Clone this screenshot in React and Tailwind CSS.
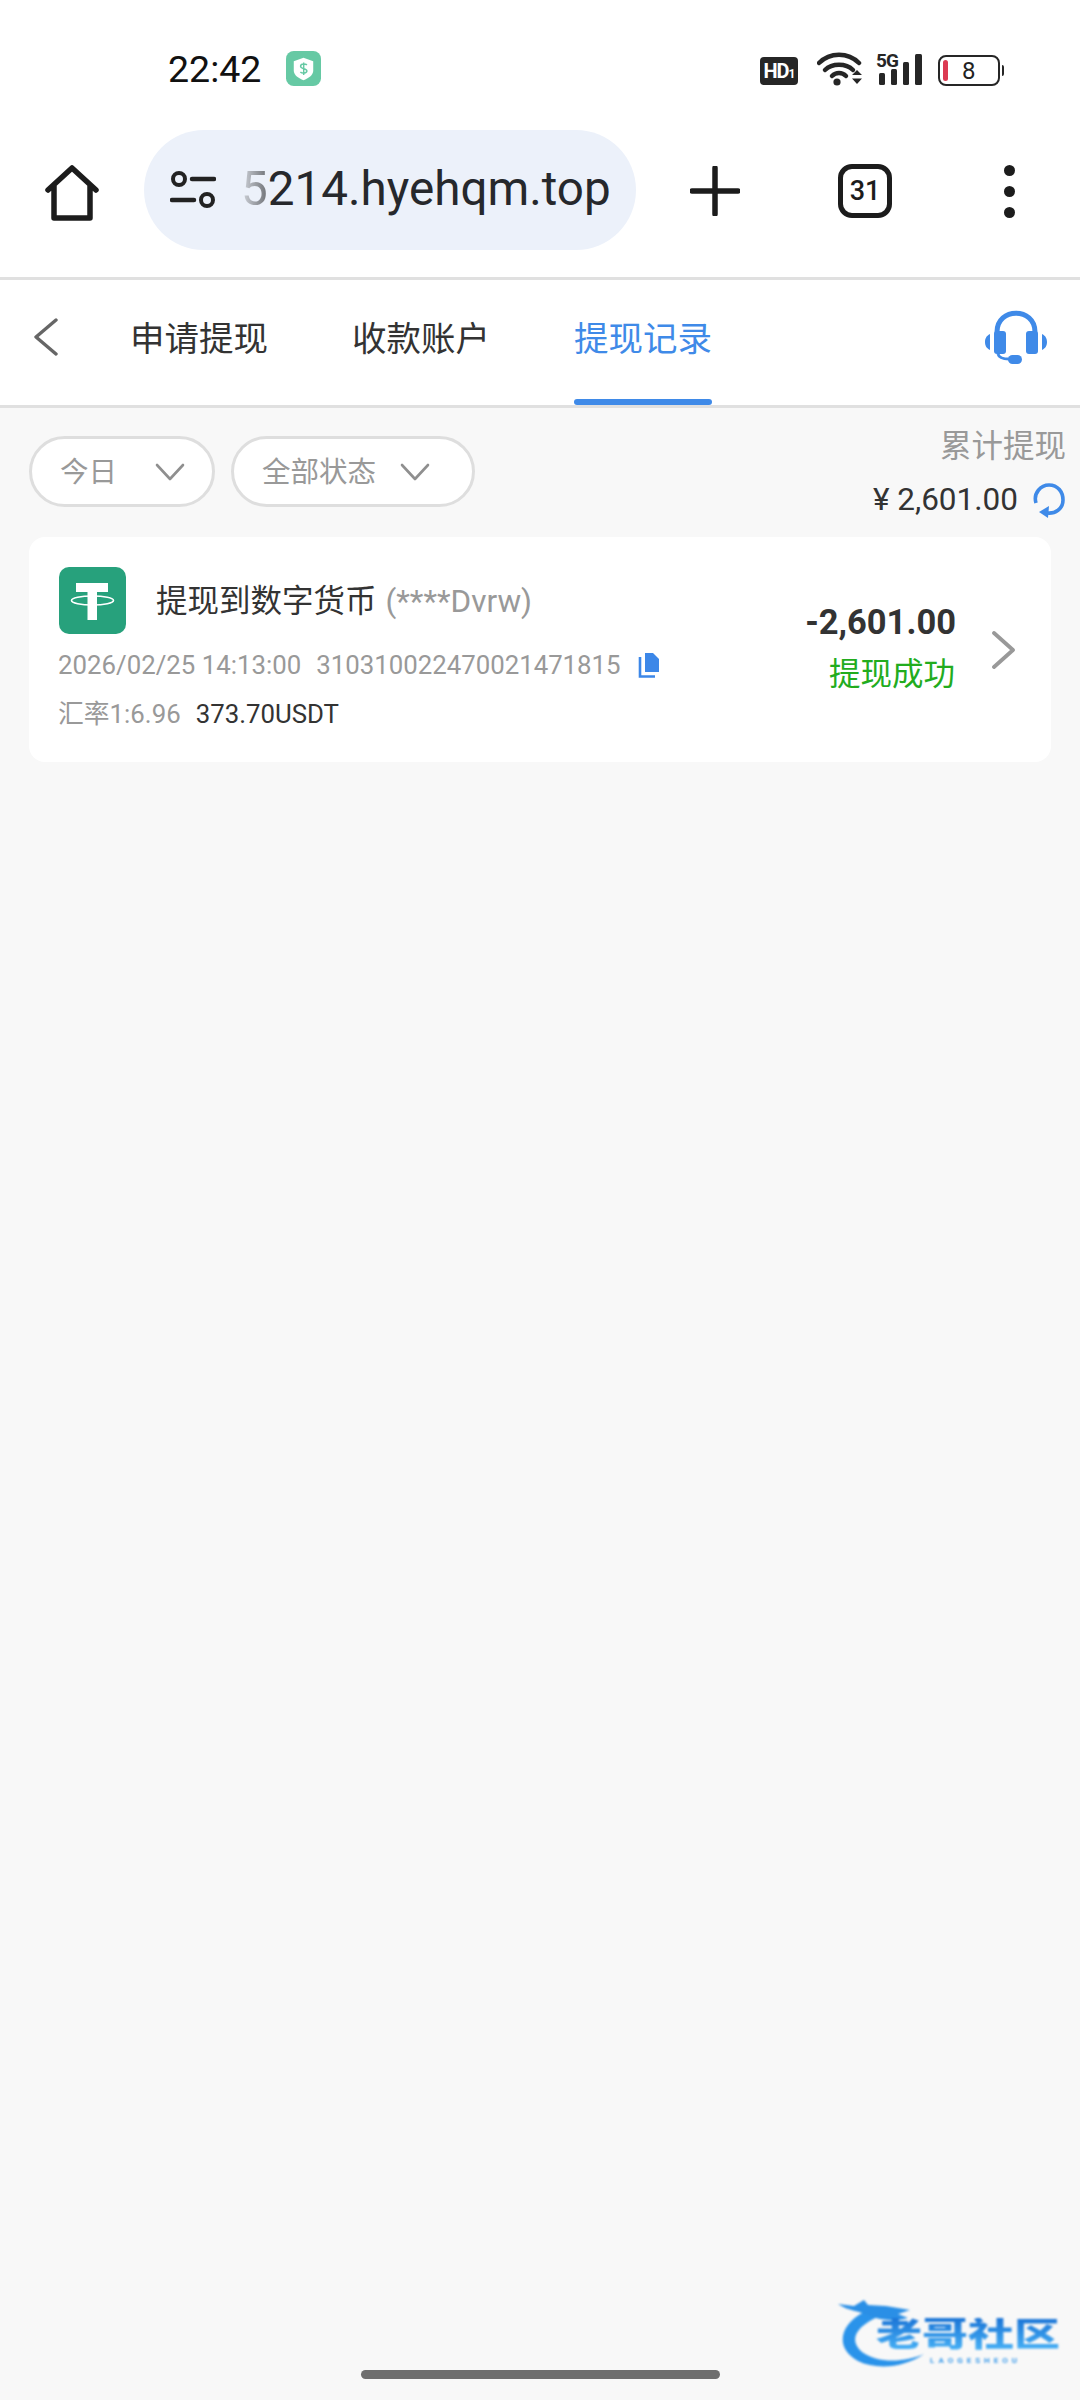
const FilterPill = ({ label, width, gap }) => (
  <div className={`flex h-[71px] items-center rounded-full border-[3px] border-[#dedede] bg-white pl-[28px] ${width}`}>
    <span className="mt-[4px] text-[28.5px] leading-none text-[#999999]">{label}</span>
    <svg width="30" height="18" viewBox="0 0 30 18" className={gap}>
      <path d="M2 2 L15 16 L28 2" fill="none" stroke="#8f8f8f" strokeWidth="2.6" strokeLinecap="round" strokeLinejoin="round" />
    </svg>
  </div>
);

function StatusBar() {
  return (
    <div className="flex h-[130px] items-start pt-[49px] pl-[168px]">
      <span className="w-[118px] text-[37.5px] leading-[40px] text-[#111111]">22:42</span>
      <svg width="35" height="35" viewBox="0 0 36 36" className="mt-[2px]">
        <rect width="36" height="36" rx="8" fill="#66c9a4" />
        <path d="M18 7 L28 10.5 V20 C28 25 23 28 18 30 C13 28 8 25 8 20 V10.5 Z" fill="#fff" />
        <path d="M21.5 14.5 C20 12.8 15 13 15 15.8 C15 19 21.5 17.4 21.5 20.6 C21.5 23 16.5 23.4 14.8 21.5 M18.2 11.8 V24.6" fill="none" stroke="#66c9a4" strokeWidth="1.5" />
      </svg>
      <div className="-mt-[1px] ml-[439px] flex items-center">
        <div className="mt-[6px] flex h-[28px] w-[38px] items-center justify-center rounded-[4px] bg-[#262626]">
          <span className="text-[20px] font-bold leading-none tracking-[-1px] text-white">HD<span className="text-[12px]">1</span></span>
        </div>
        <svg width="46" height="36" viewBox="0 0 46 36" className="ml-[19px] mt-[3px]">
          <path d="M2 12 C13 1 31 1 42 12" fill="none" stroke="#262626" strokeWidth="4.5" strokeLinecap="round" />
          <path d="M8 19 C15 12 29 12 36 19" fill="none" stroke="#262626" strokeWidth="4.5" strokeLinecap="round" />
          <path d="M15 25 C19 21 25 21 29 25" fill="none" stroke="#262626" strokeWidth="4.5" strokeLinecap="round" />
          <circle cx="20" cy="31" r="3.6" fill="#262626" />
          <path d="M35 24 L40 19 L45 24 Z M35 27.5 H45 L40 33 Z" fill="#262626" />
        </svg>
        <svg width="47" height="42" viewBox="0 -6 47 42" className="ml-[13px] -mt-[3px]">
          <text x="0" y="16" fontFamily="Roboto" fontWeight="700" fontSize="19" fill="#262626" letterSpacing="-1">5G</text>
          <rect x="3" y="22" width="6" height="12" rx="1.5" fill="#262626" />
          <rect x="15" y="18" width="6" height="16" rx="1.5" fill="#262626" />
          <rect x="27" y="11" width="6" height="23" rx="1.5" fill="#262626" />
          <rect x="39" y="3" width="7" height="31" rx="1.5" fill="#262626" />
        </svg>
        <div className="ml-[15px] mt-[6px] flex items-center">
          <div className="flex h-[31px] w-[62px] items-center rounded-[8px] border-[2px] border-[#262626] pl-[3px]">
            <div className="h-[21px] w-[5px] rounded-full bg-[#dc3a52]" />
            <span className="ml-[14px] text-[24px] leading-none text-[#222222]">8</span>
          </div>
          <div className="ml-[2px] h-[11px] w-[2px] rounded-r bg-[#262626]" />
        </div>
      </div>
    </div>
  );
}

function BrowserBar() {
  return (
    <div className="flex h-[147px] items-start pl-[45px]">
      <svg width="54" height="56" viewBox="0 0 54 56" className="mt-[35px]">
        <path d="M3 25 L27 3 L51 25 M9 21 V53 H45 V21" fill="none" stroke="#1c1c1c" strokeWidth="5.5" strokeLinecap="round" strokeLinejoin="round" />
      </svg>
      <div className="ml-[45px] flex h-[120px] w-[492px] items-center rounded-full bg-[#ecf1fa] pl-[26px]">
        <svg width="46" height="40" viewBox="0 0 46 40">
          <circle cx="9" cy="9" r="6" fill="none" stroke="#222222" strokeWidth="4" />
          <path d="M22 9 H44 M2 30 H24" stroke="#222222" strokeWidth="4.5" strokeLinecap="round" />
          <circle cx="37" cy="30" r="6" fill="none" stroke="#222222" strokeWidth="4" />
        </svg>
        <span className="ml-[25px] text-[47.6px] leading-none text-[#26282c]">
          <span className="bg-gradient-to-r from-[#d3d7de] to-[#6e7176] bg-clip-text text-transparent">5</span>214.hyehqm.top
        </span>
      </div>
      <svg width="50" height="50" viewBox="0 0 50 50" className="ml-[54px] mt-[36px]">
        <path d="M25 2 V48 M2 25 H48" stroke="#1c1c1c" strokeWidth="5.5" strokeLinecap="round" />
      </svg>
      <div className="ml-[98px] mt-[34px] flex h-[54px] w-[54px] items-center justify-center rounded-[14px] border-[5px] border-[#1c1c1c]">
        <span className="text-[27px] font-medium leading-none text-[#1c1c1c]">31</span>
      </div>
      <div className="ml-[112px] mt-[35px] flex flex-col gap-[10px]">
        <div className="h-[11px] w-[11px] rounded-full bg-[#1c1c1c]" />
        <div className="h-[11px] w-[11px] rounded-full bg-[#1c1c1c]" />
        <div className="h-[11px] w-[11px] rounded-full bg-[#1c1c1c]" />
      </div>
    </div>
  );
}

function TabBar() {
  return (
    <div className="flex h-[131px] items-start border-y-[3px] border-[#e0e0e0] bg-white pl-[33px]">
      <svg width="26" height="38" viewBox="0 0 26 38" className="mt-[38px]">
        <path d="M23 2 L3 19 L23 36" fill="none" stroke="#666666" strokeWidth="3.4" strokeLinecap="round" strokeLinejoin="round" />
      </svg>
      <span className="ml-[71px] mt-[39px] text-[34.5px] leading-[40px] text-[#333333]">申请提现</span>
      <span className="ml-[84px] mt-[39px] text-[34.5px] leading-[40px] text-[#333333]">收款账户</span>
      <div className="ml-[84px] flex h-full w-[138px] flex-col justify-between pt-[39px]">
        <span className="whitespace-nowrap text-[34.5px] leading-[40px] text-[#3f8ae8]">提现记录</span>
        <div className="h-[6px] rounded-full bg-[#3f8ae8]" />
      </div>
      <svg width="62" height="56" viewBox="0 0 62 56" className="ml-[273px] mt-[30px]">
        <path d="M12 28 V22 C12 -3 50 -3 50 22 V28" fill="none" stroke="#3f8ae8" strokeWidth="5" />
        <rect x="9" y="21" width="12" height="23" rx="3" fill="#3f8ae8" />
        <rect x="41" y="21" width="12" height="23" rx="3" fill="#3f8ae8" />
        <path d="M5 24 V40 C1 38 0 35 0 32 C0 29 1 26 5 24 Z M57 24 V40 C61 38 62 35 62 32 C62 29 61 26 57 24 Z" fill="#3f8ae8" />
        <path d="M13 44 C14 48 18 49 24 49" fill="none" stroke="#3f8ae8" strokeWidth="3" />
        <rect x="23" y="45" width="14" height="9" rx="4.5" fill="#3f8ae8" />
      </svg>
    </div>
  );
}

function Filters() {
  return (
    <div className="flex h-[129px] items-start justify-between pl-[29px] pr-[14px]">
      <div className="mt-[28px] flex gap-[16px]">
        <FilterPill label="今日" width="w-[186px]" gap="ml-[38px]" />
        <FilterPill label="全部状态" width="w-[244px]" gap="ml-[24px]" />
      </div>
      <div className="mt-[19px] flex flex-col items-end">
        <span className="text-[31.5px] leading-[40px] text-[#999999]">累计提现</span>
        <div className="mt-[13px] flex items-center">
          <span className="text-[31.5px] leading-[40px] text-[#333333]">¥ 2,601.00</span>
          <svg width="34" height="36" viewBox="0 0 34 36" className="ml-[14px]">
            <path d="M4 21 C1 11 9 3 17 3 C26 3 31 10 31 18 C31 27 23 32 15 31" fill="none" stroke="#3f8ae8" strokeWidth="3.6" />
            <path d="M17 24 L7 30 L16 36 Z" fill="#3f8ae8" />
          </svg>
        </div>
      </div>
    </div>
  );
}

function RecordCard() {
  return (
    <div className="ml-[29px] flex h-[225px] w-[1022px] items-start rounded-[16px] bg-white pl-[30px] pt-[30px]">
      <div className="flex w-[730px] flex-col">
        <div className="flex h-[67px] items-start">
          <svg width="67" height="67" viewBox="0 0 67 67" className="shrink-0">
            <rect width="67" height="67" rx="10" fill="#27a17c" />
            <path d="M17 16 H49 V25 H38 V53 H28.5 V25 H17 Z" fill="#fff" />
            <ellipse cx="33.5" cy="33.5" rx="21" ry="4.5" fill="none" stroke="#fff" strokeWidth="1.6" />
          </svg>
          <span className="ml-[30px] mt-[19px] text-[31.5px] leading-none text-[#333333]">提现到数字货币</span>
          <span className="ml-[9px] mt-[19px] text-[31.5px] leading-none text-[#999999]">(****Dvrw)</span>
        </div>
        <div className="-ml-[1px] mt-[15px] flex items-center text-[25.8px] leading-[32px] text-[#999999]">
          <span>2026/02/25 14:13:00</span>
          <span className="ml-[15px]">310310022470021471815</span>
          <svg width="22" height="26" viewBox="0 0 22 26" className="ml-[17px]">
            <path d="M7 1 H15 L21 7 V20 H7 Z" fill="#3c87e8" />
            <path d="M2 5 V24.5 H17" fill="none" stroke="#3c87e8" strokeWidth="2.6" />
          </svg>
        </div>
        <div className="-ml-[1px] mt-[17px] flex items-center text-[25.8px] leading-[32px]">
          <span className="text-[#999999]">汇率1:6.96</span>
          <span className="ml-[15px] text-[#333333]">373.70USDT</span>
        </div>
      </div>
      <div className="flex w-[167px] flex-col items-end pt-[35px]">
        <span className="whitespace-nowrap text-[34.5px] font-bold leading-[40px] text-[#333333]">-2,601.00</span>
        <span className="mr-[1px] mt-[13px] whitespace-nowrap text-[31.5px] leading-[40px] text-[#22ac1e]">提现成功</span>
      </div>
      <svg width="25" height="38" viewBox="0 0 25 38" className="ml-[35px] mt-[64px]">
        <path d="M3 2 L22 19 L3 36" fill="none" stroke="#999999" strokeWidth="3.8" strokeLinecap="round" strokeLinejoin="round" />
      </svg>
    </div>
  );
}

function Watermark() {
  return (
    <div className="absolute left-[836px] top-[2298px] h-[72px] w-[230px] blur-[0.8px]">
      <svg width="100" height="72" viewBox="0 0 100 72" className="absolute left-0 top-0">
        <path d="M28 14 C4 26 -2 50 22 63 C40 72 68 70 88 56 C70 64 42 66 26 54 C12 42 20 28 44 18 Z" fill="#2a93ea" />
        <path d="M2 6 L18 8 L28 2 L32 7 L50 8 L74 12 L62 16 L72 20 C58 24 44 22 34 18 C24 13 12 13 2 6 Z" fill="#2a8fe6" />
      </svg>
      <div className="absolute left-[40px] top-[20px] origin-top scale-y-[0.72] whitespace-nowrap bg-gradient-to-b from-[#1b74d6] to-[#48b2f6] bg-clip-text text-[46px] font-black leading-none text-transparent">老哥社区</div>
      <div className="absolute left-[94px] top-[59px] whitespace-nowrap text-[8px] font-bold leading-none tracking-[4px] text-[#3a9aea]">LAOGESHEOU</div>
    </div>
  );
}

export default function App() {
  return (
    <div className="relative flex h-[2400px] w-[1080px] flex-col overflow-hidden bg-[#f8f8f8] font-['Roboto','Noto_Sans_CJK_SC',sans-serif]">
      <div className="bg-white">
        <StatusBar />
        <BrowserBar />
      </div>
      <TabBar />
      <Filters />
      <RecordCard />
      <Watermark />
      <div className="absolute bottom-[21px] left-[361px] h-[9px] w-[359px] rounded-full bg-[#6e6e6e]" />
    </div>
  );
}
